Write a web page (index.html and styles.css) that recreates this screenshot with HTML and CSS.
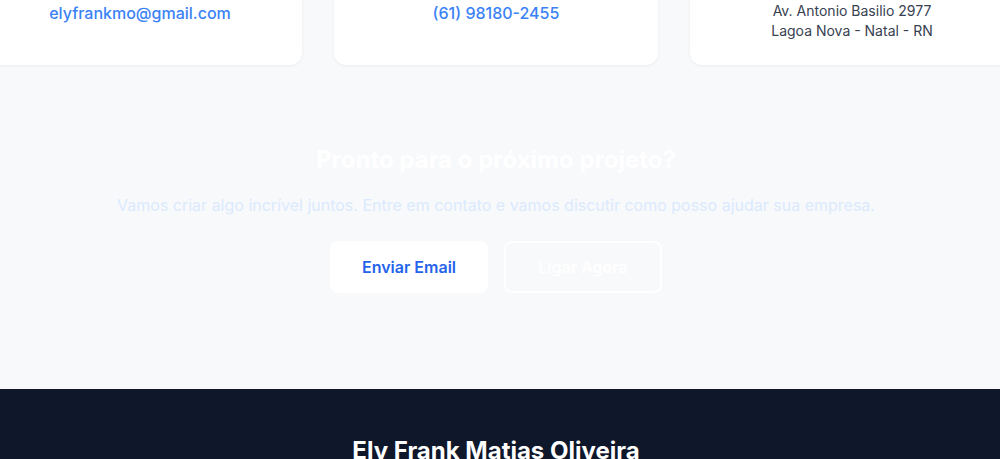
FILE: index.html
```html
<!DOCTYPE html>
<html lang="pt-BR">
<head>
<meta charset="utf-8">
<title>Contato</title>
<link rel="stylesheet" href="styles.css">
</head>
<body>
<section class="contact">
  <div class="inner">
    <div class="cards">
      <div class="card">
        <div class="card-icon">
          <svg width="24" height="24" viewBox="0 0 24 24" fill="none" stroke="#3b82f6" stroke-width="2"><rect x="3" y="5" width="18" height="14" rx="2"/><path d="M3 7l9 6 9-6"/></svg>
        </div>
        <h3 class="card-title">Email</h3>
        <a class="card-link" href="#">elyfrankmo@gmail.com</a>
      </div>
      <div class="card">
        <div class="card-icon">
          <svg width="24" height="24" viewBox="0 0 24 24" fill="none" stroke="#3b82f6" stroke-width="2"><path d="M5 4h4l2 5-2.5 1.5a11 11 0 0 0 5 5L15 13l5 2v4a2 2 0 0 1-2 2A16 16 0 0 1 3 6a2 2 0 0 1 2-2"/></svg>
        </div>
        <h3 class="card-title">Telefone</h3>
        <a class="card-link" href="#">(61) 98180-2455</a>
      </div>
      <div class="card">
        <div class="card-icon">
          <svg width="24" height="24" viewBox="0 0 24 24" fill="none" stroke="#3b82f6" stroke-width="2"><path d="M12 21s-7-6.5-7-12a7 7 0 0 1 14 0c0 5.5-7 12-7 12z"/><circle cx="12" cy="9" r="2.5"/></svg>
        </div>
        <h3 class="card-title">Endereço</h3>
        <p class="card-text">Av. Antonio Basilio 2977<br>Lagoa Nova - Natal - RN</p>
      </div>
    </div>
  </div>
</section>

<section class="cta">
  <div class="inner">
    <h2 class="cta-title">Pronto para o próximo projeto?</h2>
    <p class="cta-sub">Vamos criar algo incrível juntos. Entre em contato e vamos discutir como posso ajudar sua empresa.</p>
    <div class="cta-buttons">
      <a class="btn btn-solid" href="#">Enviar Email</a>
      <a class="btn btn-outline" href="#">Ligar Agora</a>
    </div>
  </div>
</section>

<footer class="footer">
  <div class="inner">
    <h2 class="footer-title">Ely Frank Matias Oliveira</h2>
  </div>
</footer>
</body>
</html>
```

FILE: styles.css
```css
* { box-sizing: border-box; }
html, body { margin: 0; padding: 0; }
body {
  font-family: Inter, "Noto Sans", sans-serif;
  background: #f8f9fb;
  overflow: hidden;
  color: #374151;
}
.inner {
  width: 992px;
  display: flex;
  flex-direction: column;
  align-items: center;
}
.contact {
  margin-top: -123px;
  padding-bottom: 79px;
}
.cards {
  display: flex;
  justify-content: center;
  gap: 32px;
  width: 100%;
}
.card {
  flex: 0 0 324px;
  background: #ffffff;
  border-radius: 12px;
  padding: 24px;
  box-shadow: 0 1px 3px rgba(15, 23, 42, 0.06);
  display: flex;
  flex-direction: column;
  align-items: center;
  text-align: center;
}
.card-icon {
  width: 48px;
  height: 48px;
  border-radius: 50%;
  background: #dbeafe;
  display: flex;
  align-items: center;
  justify-content: center;
  margin-bottom: 16px;
}
.card-title {
  margin: 0 0 8px;
  font-size: 18px;
  line-height: 28px;
  font-weight: 600;
  color: #111827;
}
.card-link {
  font-size: 16px;
  line-height: 26px;
  color: #3b82f6;
  text-decoration: none;
  font-weight: 500;
  margin-top: -1px;
}
.card-text {
  margin: 0;
  font-size: 14px;
  line-height: 20px;
  color: #374151;
}
.cta {
  padding-bottom: 96px;
}
.cta .inner { text-align: center; }
.cta-title {
  margin: 0 0 17px;
  font-size: 24px;
  line-height: 32px;
  font-weight: 700;
  color: #ffffff;
}
.cta-sub {
  margin: 0 0 24px;
  font-size: 16px;
  line-height: 24px;
  color: #dbeafe;
}
.cta-buttons {
  display: flex;
  gap: 16px;
}
.btn {
  width: 158px;
  height: 52px;
  border-radius: 8px;
  font-size: 16px;
  font-weight: 600;
  text-decoration: none;
  display: flex;
  align-items: center;
  justify-content: center;
}
.btn-solid {
  background: #ffffff;
  color: #2563eb;
}
.btn-outline {
  border: 2px solid #ffffff;
  color: #ffffff;
}
.footer {
  background: #0f172a;
  padding-top: 46px;
  height: 200px;
}
.footer-title {
  margin: 0;
  font-size: 24px;
  line-height: 32px;
  font-weight: 700;
  color: #ffffff;
}
```
